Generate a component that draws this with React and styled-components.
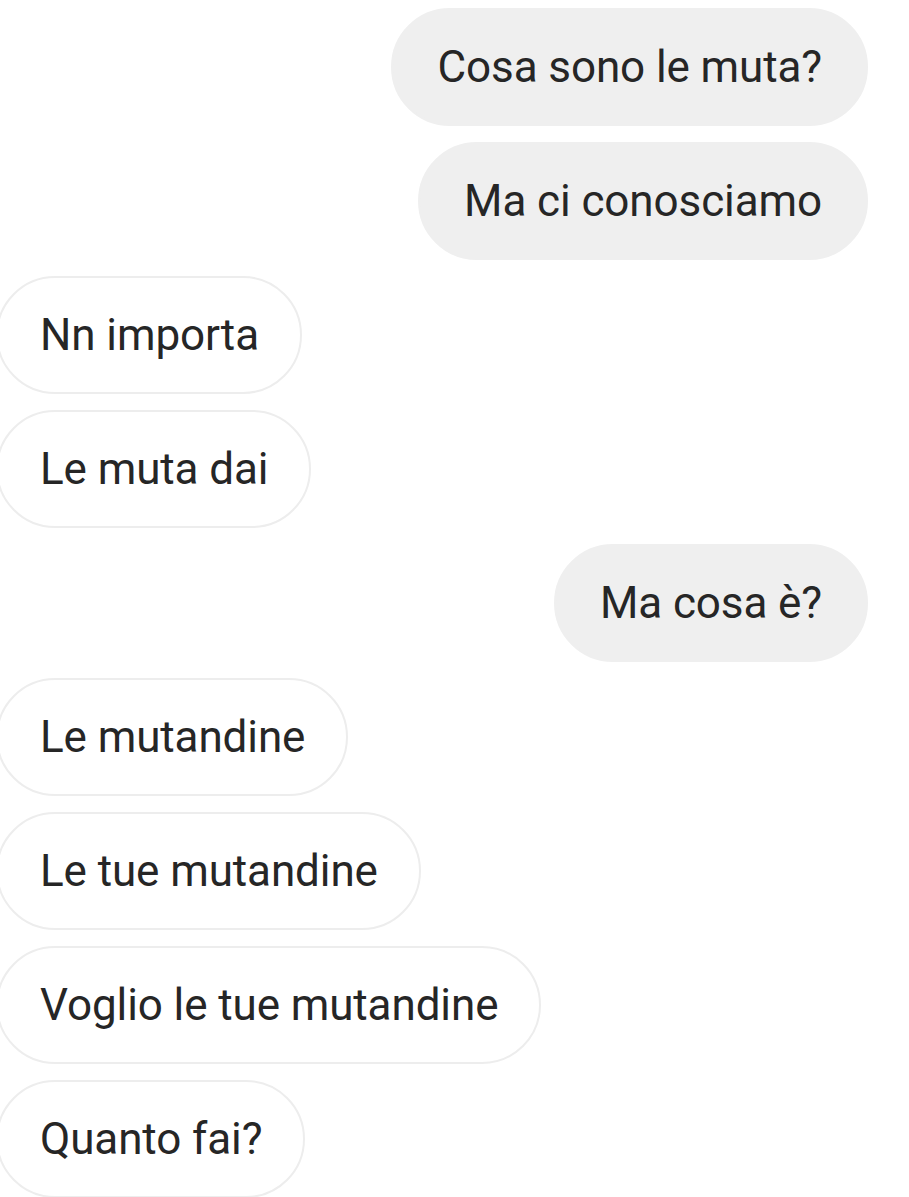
import React from 'react'
import styled, { createGlobalStyle } from 'styled-components';

const GlobalStyle = createGlobalStyle`
  html, body {
    margin: 0;
    padding: 0;
    background: #ffffff;
    overflow: hidden;
  }
`

const messages = [
  { id: 1, mine: true, text: 'Cosa sono le muta?' },
  { id: 2, mine: true, text: 'Ma ci conosciamo' },
  { id: 3, mine: false, text: 'Nn importa' },
  { id: 4, mine: false, text: 'Le muta dai' },
  { id: 5, mine: true, text: 'Ma cosa è?' },
  { id: 6, mine: false, text: 'Le mutandine' },
  { id: 7, mine: false, text: 'Le tue mutandine' },
  { id: 8, mine: false, text: 'Voglio le tue mutandine' },
  { id: 9, mine: false, text: 'Quanto fai?' },
]

const App = () => {
  return (
    <>
      <GlobalStyle />
      <Thread>
        {messages.map(m => (
          <Row key={m.id} $mine={m.mine}>
            <Bubble $mine={m.mine}>{m.text}</Bubble>
          </Row>
        ))}
      </Thread>
    </>
  )
}

const Thread = styled.div`
  width: 909px;
  height: 1197px;
  box-sizing: border-box;
  padding: 8px 41px 0 0;
  display: flex;
  flex-direction: column;
  gap: 16px;
  font-family: Roboto, "Noto Sans", sans-serif;
`

const Row = styled.div`
  display: flex;
  justify-content: ${p => (p.$mine ? 'flex-end' : 'flex-start')};
  margin-left: ${p => (p.$mine ? '0' : '-4px')};
`

const Bubble = styled.div`
  box-sizing: border-box;
  height: 118px;
  display: inline-flex;
  align-items: center;
  padding: 0 ${p => (p.$mine ? '44px' : '41px')} 0 ${p => (p.$mine ? '44px' : '42px')};
  border-radius: 59px;
  font-size: 44px;
  letter-spacing: -0.1px;
  color: #262626;
  white-space: nowrap;
  background: ${p => (p.$mine ? '#efefef' : '#ffffff')};
  border: 2px solid ${p => (p.$mine ? '#efefef' : '#ededed')};
  flex-shrink: 0;
`

export default App;
